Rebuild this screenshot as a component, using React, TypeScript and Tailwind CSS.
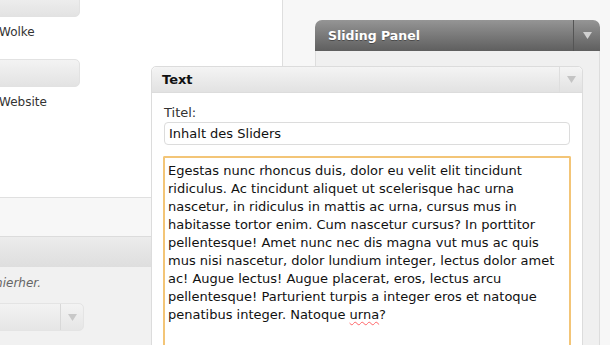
import React from "react";

const font = { fontFamily: '"DejaVu Sans", Verdana, sans-serif' };

const LINES = [
  "Egestas nunc rhoncus duis, dolor eu velit elit tincidunt",
  "ridiculus. Ac tincidunt aliquet ut scelerisque hac urna",
  "nascetur, in ridiculus in mattis ac urna, cursus mus in",
  "habitasse tortor enim. Cum nascetur cursus? In porttitor",
  "pellentesque! Amet nunc nec dis magna vut mus ac quis",
  "mus nisi nascetur, dolor lundium integer, lectus dolor amet",
  "ac! Augue lectus! Augue placerat, eros, lectus arcu",
  "pellentesque! Parturient turpis a integer eros et natoque",
];

function Arrow({ color }: { color: string }) {
  return (
    <svg width="9" height="7" viewBox="0 0 9 7">
      <path d="M0 0 H9 L4.5 7 Z" fill={color} />
    </svg>
  );
}

function Tile({ label }: { label: string }) {
  return (
    <div className="flex flex-col">
      <div className="-ml-[10px] h-[28px] w-[90px] rounded-[5px] border border-[#e2e2e2] bg-gradient-to-b from-[#f3f3f3] to-[#e3e3e3]" />
      <div className="-ml-px mt-[8px] text-[12px] leading-[14px] text-[#333]">{label}</div>
    </div>
  );
}

export default function App() {
  return (
    <div
      className="relative flex h-[345px] w-[610px] overflow-hidden bg-[#f7f7f7] text-[#222]"
      style={font}
    >
      {/* Left column */}
      <div className="flex w-[283px] flex-col border-r border-[#dedede] bg-white">
        <div className="-mt-[11px] flex h-[208px] flex-col gap-[20px]">
          <Tile label="Wolke" />
          <Tile label="Website" />
        </div>
        <div className="h-[39px] border-t border-[#e0e0e0] bg-[#f7f7f7]" />
        <div className="h-[31px] border-t border-[#dcdcdc] bg-gradient-to-b from-[#ececec] to-[#dedede]" />
        <div className="flex flex-1 flex-col bg-[#f1f1f1]">
          <div className="mt-[8px] flex w-[41px] justify-end whitespace-nowrap text-[12px] italic leading-[16px] text-[#666]">
            Ziehen Sie Elemente hierher.
          </div>
          <div className="-ml-[6px] mt-[12px] flex h-[28px] w-[90px] rounded-[5px] border border-[#e4e4e4] bg-gradient-to-b from-[#f3f3f3] to-[#e6e6e6]">
            <div className="flex-1 border-r border-[#d8d8d8]" />
            <div className="flex w-[22px] items-center justify-center">
              <Arrow color="#c8c8c8" />
            </div>
          </div>
        </div>
      </div>

      {/* Right column with sliding panel */}
      <div className="flex flex-1 flex-col pl-[32px] pr-[10px] pt-[20px]">
        <div className="flex h-[31px] rounded-t-[7px] bg-gradient-to-b from-[#959595] to-[#5f5f5f]">
          <div
            className="flex flex-1 items-center pl-[13px] pt-[2px] text-[12.5px] font-bold text-white"
            style={{ textShadow: "0 1px 0 rgba(0,0,0,0.35)" }}
          >
            Sliding Panel
          </div>
          <div className="flex w-[27px] items-center justify-center border-l border-[#555]">
            <Arrow color="#d0d0d0" />
          </div>
        </div>
        <div className="flex-1 border-x border-[#dddddd] bg-[#f0f0f0]" />
      </div>

      {/* Floating text panel */}
      <div className="absolute left-[151px] top-[66px] flex h-[300px] w-[432px] flex-col rounded-t-[5px] border border-[#dcdcdc] bg-white">
        <div className="flex h-[26px] rounded-t-[5px] border-b border-[#dcdcdc] bg-gradient-to-b from-[#f4f4f4] to-[#e2e2e2]">
          <div className="flex flex-1 items-center pl-[10px] text-[13px] font-bold text-[#111]">Text</div>
          <div className="flex w-[23px] items-center justify-center border-l border-[#dedede]">
            <Arrow color="#c4c4c4" />
          </div>
        </div>
        <div className="flex flex-1 flex-col px-[11px] pt-[12px]">
          <div className="ml-px text-[13px] leading-[16px] text-[#333]">Titel:</div>
          <div className="ml-px mr-[1px] mt-[1px] flex h-[23px] items-center rounded-[4px] border border-[#dcdcdc] pl-[4px] text-[13px] text-[#111]">
            Inhalt des Sliders
          </div>
          <div className="mt-[11px] flex-1 whitespace-nowrap rounded-t-[2px] border-2 border-b-0 border-[#f3c577] px-[3px] pt-[4px] text-[13px] leading-[18px] text-[#111]">
            {LINES.map((l) => (
              <div key={l}>{l}</div>
            ))}
            <div>
              penatibus integer. Natoque{" "}
              <span className="underline decoration-wavy decoration-red-400 decoration-1 underline-offset-2">urna</span>?
            </div>
          </div>
        </div>
      </div>
    </div>
  );
}
